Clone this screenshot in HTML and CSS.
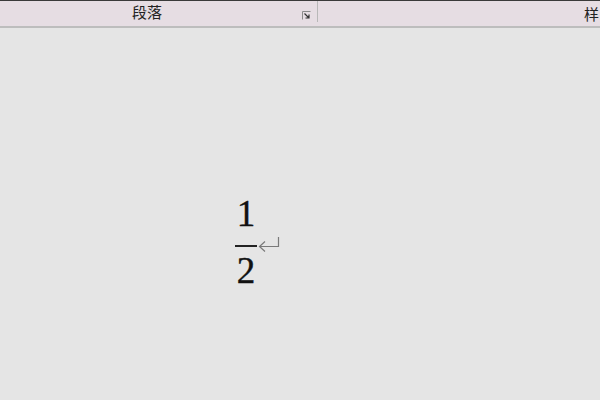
FILE: index.html
```html
<!DOCTYPE html>
<html lang="zh-CN">
<head>
  <meta charset="UTF-8" />
  <title>段落</title>
  <link rel="stylesheet" href="styles.css">
</head>
<body>

  <!-- Ribbon group labels -->
  <div class="ribbon">
    <div class="group group-para">
      <span class="label">段落</span>
      <svg class="launcher" width="9" height="9" viewBox="0 0 9 9">
        <path d="M0.5 8.5V0.5H8.5" fill="none" stroke="#8a8a8a" stroke-width="1"/>
        <path d="M2.5 2.5L7 7M7 3.5V7H3.5" fill="none" stroke="#333" stroke-width="1.2"/>
      </svg>
    </div>
    <div class="group group-style">
      <span class="label">样</span>
    </div>
  </div>

  <!-- Document page -->
  <div class="page">
    <div class="line">
      <div class="frac">
        <span class="num">1</span>
        <span class="bar"></span>
        <span class="den">2</span>
      </div>
      <svg class="para-mark" width="24" height="16" viewBox="0 0 24 16">
        <path d="M1.5 9.5H20.5V0" fill="none" stroke="#7a7a7a" stroke-width="1.2"/>
        <path d="M7 4.5L1.5 9.5L7 14.5" fill="none" stroke="#7a7a7a" stroke-width="1.2"/>
      </svg>
    </div>
  </div>

</body>
</html>
```

FILE: styles.css
```css
body {
  margin: 0;
  background: #e5e5e5;
  font-family: "Noto Sans CJK SC", "Liberation Sans", sans-serif;
  height: 400px;
  overflow: hidden;
}

.ribbon {
  display: flex;
  height: 25px;
  background: #e6dde3;
  border-top: 1px solid #3a3a3a;
  border-bottom: 2px solid #bdbdbd;
}

.group {
  display: flex;
  align-items: center;
}

.group .label {
  font-size: 15px;
  color: #222;
  line-height: 1;
}

.group-para {
  width: 318px;
  box-sizing: border-box;
  padding-left: 132px;
  padding-right: 6px;
  border-right: 1px solid #b8b8b8;
  margin-bottom: 4px;
}

.launcher {
  margin-left: auto;
  margin-top: 8px;
}

.group-style {
  flex: 1;
  padding-left: 266px;
}

.page {
  padding: 168px 0 0 235px;
}

.line {
  display: flex;
  align-items: center;
}

.frac {
  display: flex;
  flex-direction: column;
  align-items: center;
  font-family: "Liberation Serif", "DejaVu Serif", serif;
  font-size: 37px;
  color: #111;
  width: 22px;
  -webkit-text-stroke: 0.4px #111;
}

.frac span {
  line-height: 36px;
}

.frac .bar {
  width: 22px;
  height: 2px;
  background: #222;
  margin: 13px 0 6px;
}

.para-mark {
  margin-left: 1px;
  margin-top: 4px;
}
```
